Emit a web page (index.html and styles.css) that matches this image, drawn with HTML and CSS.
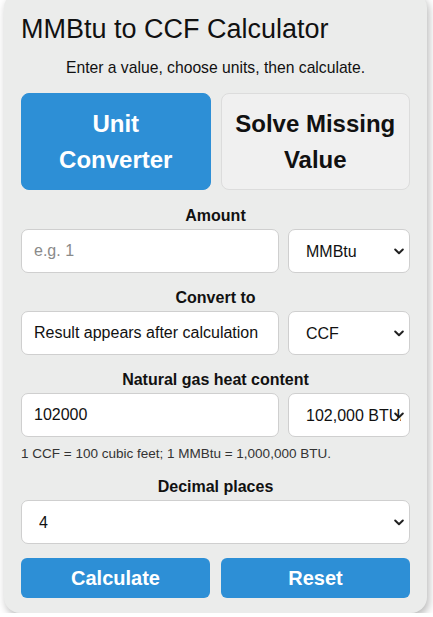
FILE: index.html
```html
<!DOCTYPE html>
<html lang="en">
<head>
<meta charset="utf-8">
<title>MMBtu to CCF Calculator</title>
<link rel="stylesheet" href="styles.css">
</head>
<body>
<div class="card">
  <h1 class="title">MMBtu to CCF Calculator</h1>
  <p class="subtitle">Enter a value, choose units, then calculate.</p>
  <div class="tabs">
    <button class="tab tab-active">Unit<br>Converter</button>
    <button class="tab">Solve Missing<br>Value</button>
  </div>
  <div class="field field-first">
    <label class="label">Amount</label>
    <div class="row">
      <input class="input" type="text" placeholder="e.g. 1">
      <select class="select"><option>MMBtu</option></select>
    </div>
  </div>
  <div class="field">
    <label class="label">Convert to</label>
    <div class="row">
      <input class="input" type="text" value="Result appears after calculation" readonly>
      <select class="select"><option>CCF</option></select>
    </div>
  </div>
  <div class="field">
    <label class="label">Natural gas heat content</label>
    <div class="row">
      <input class="input" type="text" value="102000">
      <select class="select"><option>102,000 BTU/ft³</option></select>
    </div>
  </div>
  <p class="note">1 CCF = 100 cubic feet; 1 MMBtu = 1,000,000 BTU.</p>
  <div class="field field-decimal">
    <label class="label">Decimal places</label>
    <select class="select select-full"><option>4</option></select>
  </div>
  <div class="actions">
    <button class="btn">Calculate</button>
    <button class="btn">Reset</button>
  </div>
</div>
</body>
</html>
```
FILE: styles.css
```css
html, body {
  margin: 0;
  padding: 0;
  background: #ffffff;
}
body {
  font-family: "Liberation Sans", Arial, sans-serif;
  color: #111;
}
.card {
  margin: -8px 6px 0 4px;
  padding: 20px 17px 15px;
  background: #ebeceb;
  border-radius: 16px;
  box-shadow: 2px 4px 8px rgba(0, 0, 0, 0.28);
}
.title {
  margin: 0;
  font-size: 27px;
  font-weight: normal;
  line-height: 34px;
  color: #111;
}
.subtitle {
  margin: 13px 0 0;
  font-size: 15.7px;
  line-height: 18px;
  text-align: center;
  color: #111;
}
.tabs {
  margin-top: 16px;
  display: grid;
  grid-template-columns: 1fr 1fr;
  gap: 10px;
}
.tab {
  font-family: "Liberation Sans", Arial, sans-serif;
  font-size: 24px;
  font-weight: bold;
  line-height: 36px;
  padding: 11.5px 8px;
  border: 1px solid #dcdcdc;
  border-radius: 8px;
  background: #f0f0f0;
  color: #111;
}
.tab-active {
  background: #2d8fd6;
  border-color: #2d8fd6;
  color: #fff;
}
.field {
  margin-top: 16px;
}
.field-first {
  margin-top: 17px;
}
.field-decimal {
  margin-top: 16px;
}
.label {
  display: block;
  margin-bottom: 4px;
  font-size: 16px;
  font-weight: bold;
  line-height: 18px;
  text-align: center;
}
.row {
  display: grid;
  grid-template-columns: 1fr 122px;
  gap: 9px;
}
.input, .select {
  box-sizing: border-box;
  height: 44px;
  width: 100%;
  margin: 0;
  padding: 0 12px;
  font-family: "Liberation Sans", Arial, sans-serif;
  font-size: 16px;
  color: #111;
  background-color: #fff;
  border: 1px solid #cfcfcf;
  border-radius: 7px;
}
.select {
  -webkit-appearance: none;
  appearance: none;
  padding: 0 8px 0 17px;
  overflow: hidden;
  white-space: nowrap;
  background-image: url("data:image/svg+xml;utf8,<svg xmlns='http://www.w3.org/2000/svg' width='10' height='7' viewBox='0 0 10 7'><path d='M1.2 1.5 L5 5.2 L8.8 1.5' fill='none' stroke='%23222' stroke-width='2' stroke-linecap='round' stroke-linejoin='round'/></svg>");
  background-repeat: no-repeat;
  background-position: right 5px center;
  background-size: 10px 7px;
}
.input::placeholder {
  color: #8a8a8a;
}
.note {
  margin: 9px 0 0;
  font-size: 13.5px;
  line-height: 16px;
  color: #333;
}
.actions {
  margin-top: 14px;
  display: grid;
  grid-template-columns: 1fr 1fr;
  gap: 11px;
}
.btn {
  height: 40px;
  font-family: "Liberation Sans", Arial, sans-serif;
  font-size: 20px;
  font-weight: bold;
  color: #fff;
  background: #2d8fd6;
  border: none;
  border-radius: 6px;
}
```
